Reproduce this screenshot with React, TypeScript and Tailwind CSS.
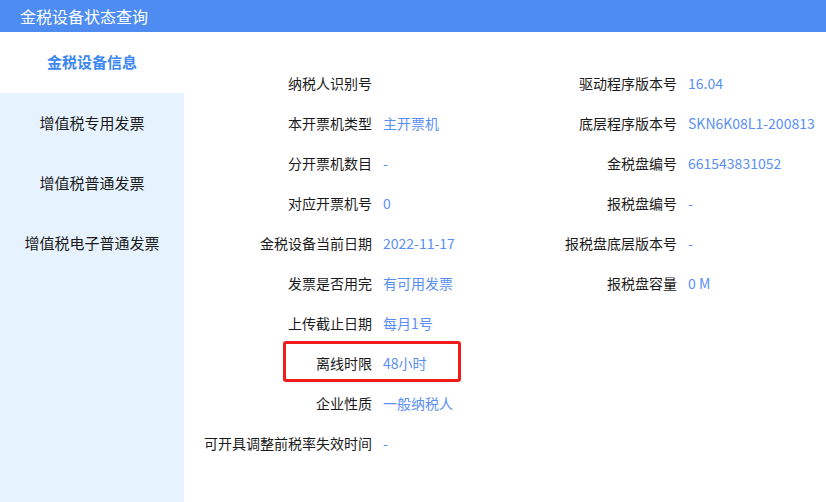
import React from 'react';

const tabs = ['金税设备信息', '增值税专用发票', '增值税普通发票', '增值税电子普通发票'];

const leftRows: [string, string][] = [
  ['纳税人识别号', ''],
  ['本开票机类型', '主开票机'],
  ['分开票机数目', '-'],
  ['对应开票机号', '0'],
  ['金税设备当前日期', '2022-11-17'],
  ['发票是否用完', '有可用发票'],
  ['上传截止日期', '每月1号'],
  ['离线时限', '48小时'],
  ['企业性质', '一般纳税人'],
  ['可开具调整前税率失效时间', '-'],
];

const rightRows: [string, string][] = [
  ['驱动程序版本号', '16.04'],
  ['底层程序版本号', 'SKN6K08L1-200813'],
  ['金税盘编号', '661543831052'],
  ['报税盘编号', '-'],
  ['报税盘底层版本号', '-'],
  ['报税盘容量', '0 M'],
];

const App: React.FC = () => {
  return (
    <div
      className="w-[826px] h-[502px] flex flex-col bg-white overflow-hidden text-[14px]"
      style={{ fontFamily: '"Microsoft YaHei", "Noto Sans CJK SC", "Noto Sans", sans-serif' }}
    >
      <header className="h-8 flex-shrink-0 bg-[#4e8cf2] flex items-center pl-5">
        <h1 className="text-white text-[16px] leading-none">金税设备状态查询</h1>
      </header>

      <div className="flex flex-grow">
        {/* 侧边标签 */}
        <nav className="w-[184px] flex-shrink-0 bg-[#e6f3ff] flex flex-col text-[15px]">
          {tabs.map((t, i) => (
            <div
              key={t}
              className={
                i === 0
                  ? 'h-[61px] flex items-center justify-center bg-white text-[#3c87f0] font-bold'
                  : 'h-[60px] flex items-center justify-center text-[#1a1a1a]'
              }
            >
              {t}
            </div>
          ))}
        </nav>

        <main className="flex-grow flex pt-[31px]">
          <div className="w-[316px] flex flex-col">
            {leftRows.map(([label, value]) => (
              <div key={label} className="relative h-10 flex items-center">
                <span className="w-[188px] text-right text-[#1a1a1a]">{label}</span>
                <span className="ml-[11px] text-[#5a8ff2]">{value}</span>
                {label === '离线时限' && (
                  <div className="absolute left-[99px] top-[-2px] w-[178px] h-[41px] border-[3px] border-[#f01c1c] rounded-[3px]" />
                )}
              </div>
            ))}
          </div>
          <div className="flex flex-col">
            {rightRows.map(([label, value]) => (
              <div key={label} className="h-10 flex items-center">
                <span className="w-[177px] text-right text-[#1a1a1a]">{label}</span>
                <span className="ml-[11px] text-[#5a8ff2] whitespace-nowrap">{value}</span>
              </div>
            ))}
          </div>
        </main>
      </div>
    </div>
  );
};

export default App;
